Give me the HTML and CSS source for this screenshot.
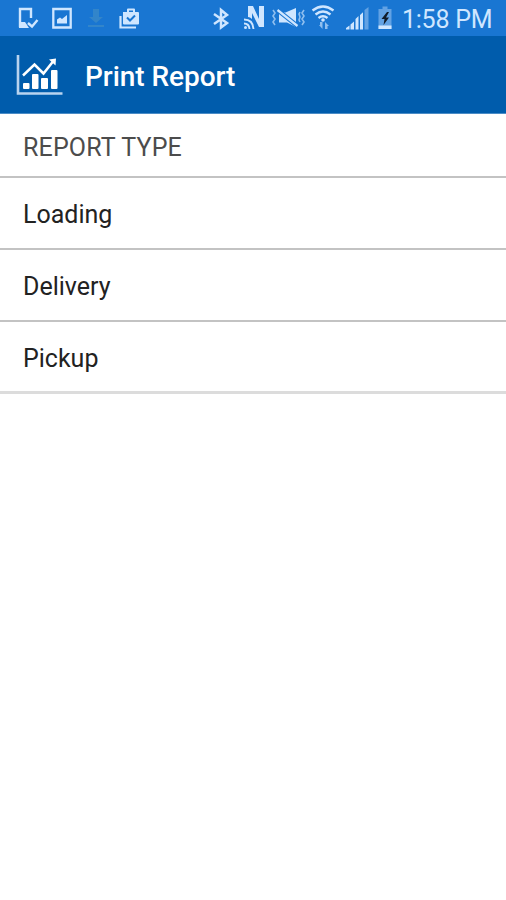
FILE: index.html
```html
<!DOCTYPE html>
<html lang="en">
<head>
<meta charset="utf-8">
<title>Print Report</title>
<link rel="stylesheet" href="styles.css">
</head>
<body>
<div class="status">
  <div class="group">
    <svg width="30" height="36" viewBox="16 0 30 36"><path class="line" d="M31 18V9H20v17h7" stroke-width="2.4"/><path class="fill" d="M19 22h6l4 6H19z"/><path class="line" d="M28 23l4 3.500 5.500-6.500" stroke-width="2.4"/></svg>
    <svg width="36" height="36" viewBox="46 0 36 36"><path class="line" d="M53.300 9h17.400v18.500H53.300z" stroke-width="2.300"/><path class="fill" d="M57 23.500v-4l3-2 2 1.500 5-4v8.500z"/></svg>
    <svg class="faint" width="30" height="36" viewBox="82 0 30 36"><path d="M93 9h6v8h4l-7 6-7-6h4zM88 25h16v2H88z"/></svg>
    <svg width="34" height="36" viewBox="112 0 34 36"><path class="line" d="M120.500 16v11.500H136" stroke-width="2.200"/><path class="fill" fill-rule="evenodd" d="M123 12h4V9.500q0-1 1-1h6q1 0 1 1V12h3q1 0 1 1v10.500q0 1-1 1h-14q-1 0-1-1zm6 0h4v-1.500h-4z"/><path class="cut" d="M127 17.500l3 3 5-5"/></svg>
  </div>
  <div class="group">
    <svg width="34" height="36" viewBox="206 0 34 36"><path class="line" d="M214 14l13 9-6 4.500V10l6 5-13 9" stroke-width="2.500"/></svg>
    <svg width="30" height="36" viewBox="240 0 30 36"><path class="fill" d="M248 6h5l6 13V6h5v21h-5l-7-14v6q-2-2-4-2z"/><path class="line" d="M244 19.500q9 0 9.500 9.500M244 23.500q5 0 5.500 5.500" stroke-width="1.900"/><circle class="fill" cx="245.500" cy="27.500" r="1.500"/></svg>
    <svg width="38" height="36" viewBox="270 0 38 36"><path class="fill" d="M279 12.500h6.500L296 8v19l-9-4.500h-8z"/><path d="M277.500 10l20 16" stroke="#1976d2" stroke-width="4.500"/><path class="line" d="M277.500 10l20 16" stroke-width="2.300"/><path class="line dim" d="M273 10l2 3-2 3 2 3-2 3 2 3M304 10l-2 3 2 3-2 3 2 3-2 3M300 12l-1 2 1 3-1 3 1 2" stroke-width="1.600"/></svg>
    <svg width="34" height="36" viewBox="308 0 34 36"><path class="line" d="M312.500 10.500q10.500-8 21 0M315.500 14.500q7.500-6 15 0M318.500 18q4.500-3.500 9 0" stroke-width="2.300"/><circle class="fill" cx="323" cy="20" r="1.800"/><path class="fill dim" d="M322.500 29l-3.500-4h1v-3h2.500v7zM325 22l4 4h-1.500v3H325z"/></svg>
    <svg width="32" height="36" viewBox="342 0 32 36"><path class="fill" d="M346 29.500v-1.500l3.500-2.500v4zM350.500 29.500v-5l3.500-3v8zM355.500 29.500V19l3-3v13.500zM360 29.500V15l3-2.800v17.300z"/><path class="fill shade" d="M364.500 29.500V10l4-3v22.500z"/></svg>
    <svg width="28" height="36" viewBox="374 0 28 36"><path class="fill shade" d="M378.500 9h4V6.500h5V9h4v20h-13z"/><path class="fill" d="M378.500 25.500h13V29h-13z"/><path d="M387 12l-5.500 7h3l-1 6 5.500-7.500h-3l3-5.500z" fill="#101c2a"/></svg>
    <span class="time">1:58 PM</span>
  </div>
</div>
<header class="bar">
  <svg width="48" height="44" viewBox="16 53 48 44"><path d="M18 55v38.500h44.500" fill="none" stroke="#b8d3ef" stroke-width="2.600"/><path d="M23 75.500l11.500-11 9 9L53 61.500" fill="none" stroke="#fff" stroke-width="2.500"/><path d="M49 59.500l7-1-.5 7z" fill="#fff"/><g fill="#fff"><rect x="23" y="83" width="6.500" height="6" rx="1"/><rect x="32" y="74" width="6.500" height="15" rx="1"/><rect x="41" y="78" width="7" height="11" rx="1"/><rect x="51" y="70" width="6.500" height="19" rx="1"/></g></svg>
  <h1>Print Report</h1>
</header>
<main>
  <h2>REPORT TYPE</h2>
  <ul>
    <li>Loading</li>
    <li>Delivery</li>
    <li>Pickup</li>
  </ul>
</main>
</body>
</html>
```
FILE: styles.css
```css
* { box-sizing: border-box; }
body { margin: 0; min-height: 900px; background: #fff; font-family: Roboto, "Liberation Sans", sans-serif; }
svg { display: block; flex: none; }
.status { display: flex; justify-content: space-between; height: 36px; padding-left: 16px; background: #1976d2; }
.group { display: flex; width: 130px; }
.group + .group { width: 300px; }
.line { fill: none; stroke: #cfe6ff; }
.fill { fill: #cfe6ff; }
.dim { opacity: .65; }
.shade { opacity: .4; }
.faint { fill: #408dc6; opacity: .65; }
.cut { fill: none; stroke: #1976d2; stroke-width: 2; }
.time { color: #cfe6ff; font-size: 25px; letter-spacing: -.25px; line-height: 39px; white-space: nowrap; }
.bar { display: flex; align-items: center; height: 78px; padding: 0 16px; background: #005cac; border-bottom: 1px solid #4b8cc6; }
h1 { margin: 5px 0 0 21px; color: #fff; font-size: 28px; font-weight: 500; letter-spacing: -.05px; line-height: 36px; white-space: nowrap; }
h2 { height: 64px; margin: 0; padding-left: 23px; border-bottom: 2px solid #c3c3c3; color: #4c4c4c; font-size: 25px; font-weight: 400; letter-spacing: .15px; line-height: 67px; }
ul { margin: 0; padding: 0; list-style: none; }
li { height: 72px; padding-left: 23px; border-bottom: 2px solid #c3c3c3; color: #222; font-size: 25px; line-height: 73px; }
li:last-child { border-bottom: 3px solid #dcdcdc; }
```
